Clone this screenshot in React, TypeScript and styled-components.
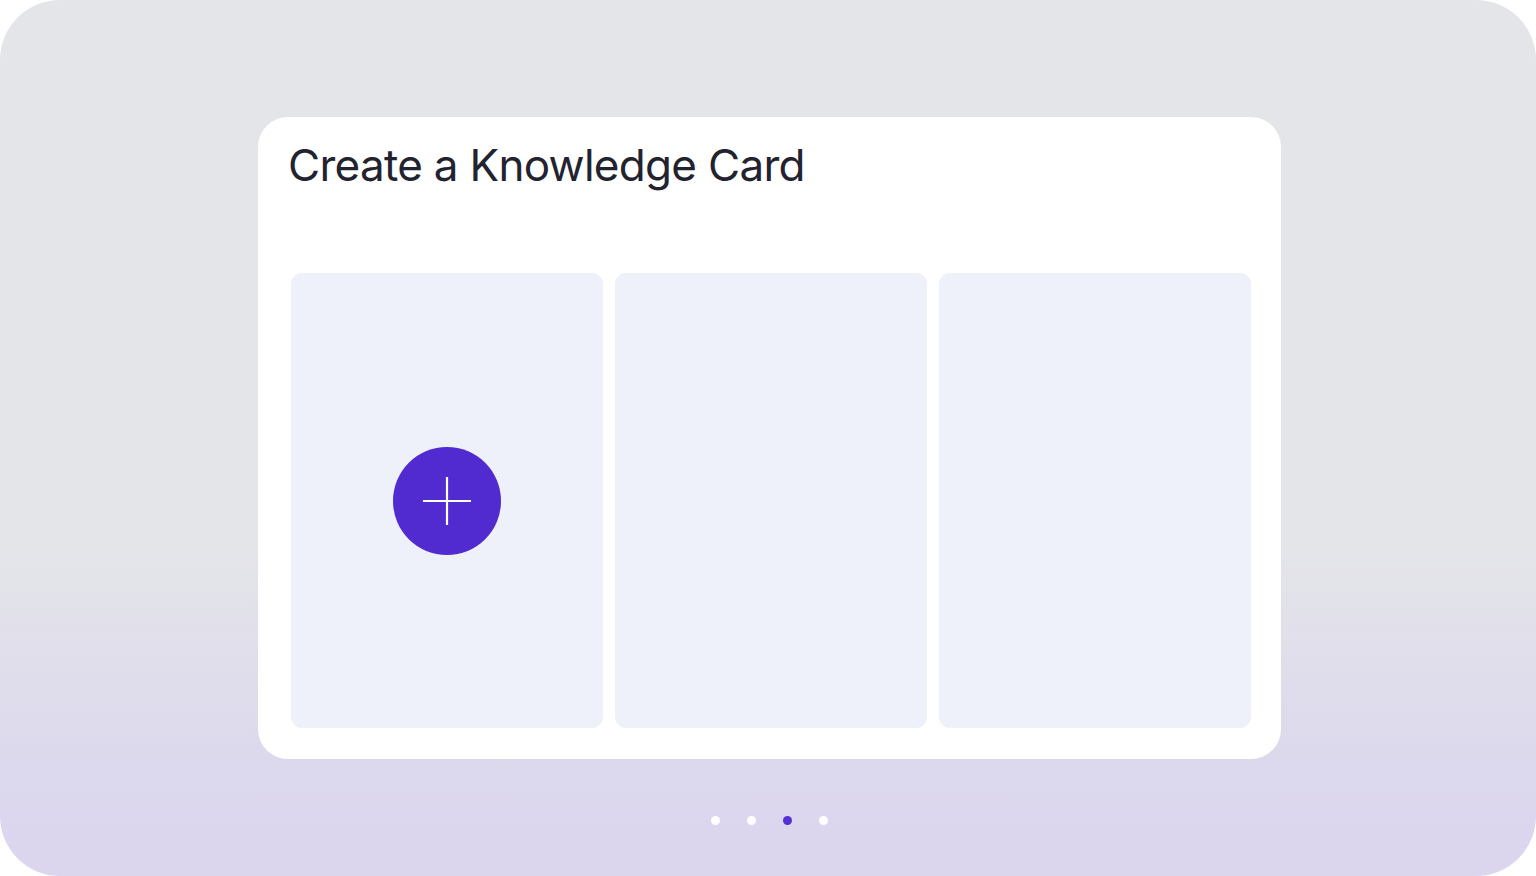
import styled, { createGlobalStyle } from "styled-components";

const GlobalStyle = createGlobalStyle`
  html, body {
    margin: 0;
    padding: 0;
    background: #ffffff;
  }
  * {
    box-sizing: border-box;
  }
`;

const slides = [0, 1, 2, 3];
const activeSlide = 2;

const App = () => {
  return (
    <>
      <GlobalStyle />
      <Frame>
        <Card>
          <Title>Create a Knowledge Card</Title>
          <Panels>
            <Panel>
              <AddButton aria-label="Add card">
                <svg width="50" height="50" viewBox="0 0 50 50">
                  <path
                    d="M25 1 V49 M1 25 H49"
                    stroke="#ffffff"
                    strokeWidth="2.2"
                    fill="none"
                  />
                </svg>
              </AddButton>
            </Panel>
            <Panel />
            <Panel />
          </Panels>
        </Card>
        <Dots>
          {slides.map((i) => (
            <Dot key={i} $active={i === activeSlide} />
          ))}
        </Dots>
      </Frame>
    </>
  );
};

export default App;

const Frame = styled.div`
  width: 1536px;
  height: 876px;
  border-radius: 60px;
  overflow: hidden;
  display: flex;
  flex-direction: column;
  align-items: center;
  padding: 117px 0 0 3px;
  background: linear-gradient(
    to bottom,
    #e4e5e9 0%,
    #e4e5e9 62%,
    #dcd8ed 88%,
    #dbd5ee 100%
  );
`;

const Card = styled.div`
  width: 1023px;
  height: 642px;
  background: #ffffff;
  border-radius: 30px;
  display: flex;
  flex-direction: column;
  padding: 0 30px 31px 33px;
`;

const Title = styled.h1`
  margin: 0;
  height: 156px;
  padding-top: 22px;
  margin-left: -3px;
  font-family: Inter, "Noto Sans", sans-serif;
  font-weight: 400;
  font-size: 44px;
  letter-spacing: -0.7px;
  line-height: 52px;
  color: #23232f;
`;

const Panels = styled.div`
  flex: 1;
  display: grid;
  grid-template-columns: repeat(3, 1fr);
  gap: 12px;
`;

const Panel = styled.div`
  background: #eef1f9;
  border-radius: 11px;
  display: flex;
  align-items: center;
  justify-content: center;
`;

const AddButton = styled.button`
  width: 108px;
  height: 108px;
  border-radius: 50%;
  border: none;
  padding: 0;
  background: #512bd0;
  display: flex;
  align-items: center;
  justify-content: center;
  cursor: pointer;
`;

const Dots = styled.div`
  display: flex;
  gap: 27px;
  margin-top: 57px;
`;

const Dot = styled.span<{ $active: boolean }>`
  width: 9px;
  height: 9px;
  border-radius: 50%;
  background: ${({ $active }) => ($active ? "#5530d2" : "#ffffff")};
`;
